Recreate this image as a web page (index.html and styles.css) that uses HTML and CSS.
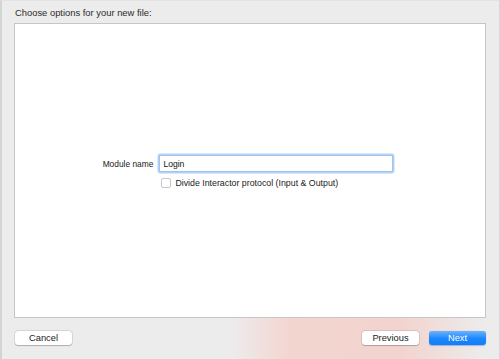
FILE: index.html
```html
<!DOCTYPE html>
<html lang="en">
<head>
    <meta charset="UTF-8">
    <title>Choose options for your new file</title>
    <link rel="stylesheet" href="styles.css">
</head>
<body>

<div class="sheet">
    <div class="sheet-title">Choose options for your new file:</div>

    <div class="panel">
        <div class="form">
            <label class="form-label" for="module">Module name</label>
            <input class="form-field" id="module" type="text" value="Login">
            <span></span>
            <label class="check">
                <span class="check-box"></span>
                Divide Interactor protocol (Input &amp; Output)
            </label>
        </div>
    </div>

    <div class="footer">
        <button class="btn">Cancel</button>
        <div class="footer-right">
            <button class="btn">Previous</button>
            <button class="btn btn-primary">Next</button>
        </div>
    </div>
</div>

</body>
</html>
```

FILE: styles.css
```css
body {
    margin: 0;
    width: 500px;
    height: 359px;
    overflow: hidden;
    background: #ececec;
    font-family: "Liberation Sans", Arial, sans-serif;
    color: #262626;
}

.sheet {
    height: 359px;
    box-sizing: border-box;
    border-left: 2px solid #d4d4d4;
    border-right: 1px solid #d8d8d8;
    border-top: 1px solid #e2e2e2;
    display: flex;
    flex-direction: column;
}

.sheet-title {
    height: 22px;
    padding-left: 13px;
    font-size: 9.4px;
    line-height: 24px;
    color: #2b2b2b;
}

.panel {
    margin-left: 12px;
    width: 470px;
    height: 293px;
    background: #fff;
    border: 1px solid #c6c6c6;
    display: flex;
    align-items: center;
    justify-content: center;
}

/* Форма */
.form {
    display: grid;
    grid-template-columns: auto 234px;
    column-gap: 6px;
    row-gap: 6px;
    align-items: center;
    margin-left: -4px;
    margin-top: 2px;
}

.form-label {
    font-size: 8.4px;
    text-align: right;
    color: #222;
}

.form-field {
    box-sizing: border-box;
    width: 234px;
    height: 17px;
    margin: 0;
    padding: 0 3px;
    border: 1px solid #9fc4ee;
    box-shadow: 0 0 0 1.5px #b2d3f6;
    border-radius: 1px;
    font-family: "Liberation Sans", Arial, sans-serif;
    font-size: 8.6px;
    color: #111;
    outline: none;
}

.check {
    display: flex;
    align-items: center;
    gap: 4px;
    font-size: 8.8px;
    color: #222;
    margin-left: 2px;
}

.check-box {
    width: 8px;
    height: 8px;
    border: 1px solid #c8c8c8;
    border-radius: 2px;
    background: #fff;
}

/* Нижняя панель */
.footer {
    flex: 1;
    display: flex;
    justify-content: space-between;
    align-items: flex-start;
    padding: 13px 13px 0 13px;
    background: linear-gradient(90deg, rgba(242, 212, 206, 0) 46%, #f3d5d0 58%, #f2d3ce 80%, rgba(242, 212, 206, 0) 97%);
}

.footer-right {
    display: flex;
    gap: 10px;
}

.btn {
    width: 57px;
    height: 14px;
    padding: 0;
    border: none;
    border-radius: 3px;
    background: #fff;
    box-shadow: 0 0 0 0.5px rgba(0, 0, 0, 0.15), 0 0.5px 1px rgba(0, 0, 0, 0.2);
    font-family: "Liberation Sans", Arial, sans-serif;
    font-size: 9.3px;
    line-height: 14px;
    color: #222;
}

.btn-primary {
    background: linear-gradient(#6cb3fa, #1b86fd 55%, #0f7ffc);
    color: #fff;
    box-shadow: 0 0.5px 1px rgba(0, 60, 160, 0.3);
}
```
